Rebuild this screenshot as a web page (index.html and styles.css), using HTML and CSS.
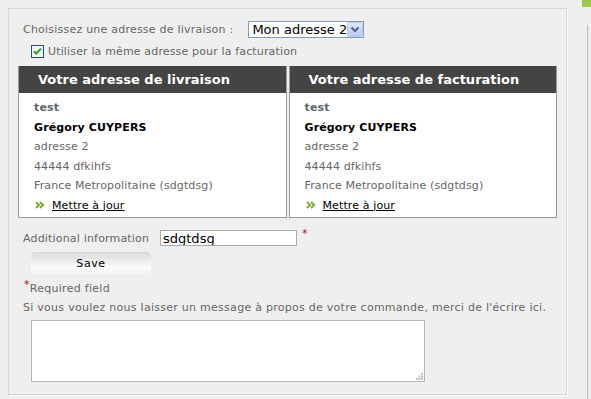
FILE: index.html
```html
<!DOCTYPE html>
<html lang="fr">
<head>
<meta charset="utf-8">
<link rel="stylesheet" href="styles.css">
</head>
<body>
<div class="layout">
  <div class="panel">
    <div class="row-choose">
      <span class="label choose-label">Choisissez une adresse de livraison :</span>
      <span class="select-wrap">
        <select class="select"><option>Mon adresse 2</option></select>
        <svg class="select-btn" width="16" height="15" viewBox="0 0 16 15">
          <defs><linearGradient id="sb" x1="0" y1="0" x2="0" y2="1"><stop offset="0" stop-color="#dfe9fd"/><stop offset="1" stop-color="#b4c8f4"/></linearGradient></defs>
          <rect x="0.5" y="0.5" width="15" height="14" rx="1.5" fill="url(#sb)" stroke="#b7c9ef"/>
          <path d="M4.5 5.5 L8 9 L11.5 5.5" fill="none" stroke="#4d6185" stroke-width="2"/>
        </svg>
      </span>
    </div>
    <div class="row-check">
      <svg class="checkbox" width="13" height="13" viewBox="0 0 13 13">
        <rect x="0.5" y="0.5" width="12" height="12" fill="#f4f4f0" stroke="#1c5180"/>
        <path d="M3 6.2 L5.2 8.6 L10 3.6" fill="none" stroke="#21a121" stroke-width="2"/>
      </svg>
      <span class="label check-label">Utiliser la même adresse pour la facturation</span>
    </div>
    <div class="boxes">
      <div class="box">
        <div class="box-head">Votre adresse de livraison</div>
        <div class="box-body">
          <div class="alias">test</div>
          <div class="name">Grégory CUYPERS</div>
          <div class="line">adresse 2</div>
          <div class="line">44444 dfkihfs</div>
          <div class="line">France Metropolitaine (sdgtdsg)</div>
          <div class="update">
            <svg class="arrows" width="10" height="8" viewBox="0 0 10 8"><path d="M1 1 L4 4 L1 7 M5 1 L8 4 L5 7" fill="none" stroke="#7fae2a" stroke-width="2"/></svg>
            <a href="#" class="link">Mettre à jour</a>
          </div>
        </div>
      </div>
      <div class="box">
        <div class="box-head">Votre adresse de facturation</div>
        <div class="box-body">
          <div class="alias">test</div>
          <div class="name">Grégory CUYPERS</div>
          <div class="line">adresse 2</div>
          <div class="line">44444 dfkihfs</div>
          <div class="line">France Metropolitaine (sdgtdsg)</div>
          <div class="update">
            <svg class="arrows" width="10" height="8" viewBox="0 0 10 8"><path d="M1 1 L4 4 L1 7 M5 1 L8 4 L5 7" fill="none" stroke="#7fae2a" stroke-width="2"/></svg>
            <a href="#" class="link">Mettre à jour</a>
          </div>
        </div>
      </div>
    </div>
    <div class="row-info">
      <span class="label info-label">Additional information</span>
      <input class="text-input" type="text" value="sdgtdsg">
      <span class="req">*</span>
    </div>
    <button class="save" type="button">Save</button>
    <div class="required"><span class="req small">*</span>Required field</div>
    <div class="message">Si vous voulez nous laisser un message à propos de votre commande, merci de l'écrire ici.</div>
    <div class="area-wrap">
      <textarea class="textarea"></textarea>
      <svg class="grip" width="7" height="7" viewBox="0 0 7 7">
        <rect x="5" y="0" width="2" height="2" fill="#c4c4c4"/>
        <rect x="2.5" y="2.5" width="2" height="2" fill="#c4c4c4"/>
        <rect x="5" y="2.5" width="2" height="2" fill="#c4c4c4"/>
        <rect x="0" y="5" width="2" height="2" fill="#c4c4c4"/>
        <rect x="2.5" y="5" width="2" height="2" fill="#c4c4c4"/>
        <rect x="5" y="5" width="2" height="2" fill="#c4c4c4"/>
      </svg>
    </div>
  </div>
  <div class="side"></div>
</div>
</body>
</html>
```
FILE: styles.css
```css
html, body {
  margin: 0;
  padding: 0;
  background: #efefef;
  font-family: "DejaVu Sans", Verdana, sans-serif;
  font-size: 11px;
  color: #666;
}
.layout {
  display: flex;
  align-items: flex-start;
  height: 399px;
}
.panel {
  margin: 8px 0 0 8px;
  width: 539px;
  height: 385px;
  padding: 0 9px 0 9px;
  border: 1px solid #d6d6d6;
  box-shadow: 1px 1px 0 #fafafa;
  display: flex;
  flex-direction: column;
}
.side {
  margin-left: 15px;
  width: 9px;
  height: 399px;
  position: relative;
  background: linear-gradient(#9dc84a, #9dc84a) 0 0 / 9px 7px no-repeat;
}
.side::after {
  content: "";
  position: absolute;
  left: 5px;
  top: 25px;
  bottom: 0;
  width: 1px;
  background: #b9b9b9;
}
.label { color: #666; }
.row-choose {
  display: flex;
  align-items: center;
  height: 17px;
  margin-top: 12px;
  padding-left: 5px;
}
.choose-label { letter-spacing: 0.22px; }
.select-wrap {
  position: relative;
  margin-left: 15px;
  display: inline-block;
  height: 17px;
}
.select {
  appearance: none;
  -webkit-appearance: none;
  box-sizing: border-box;
  width: 116px;
  height: 17px;
  border: 1px solid #7f9db9;
  border-radius: 0;
  background: #fff;
  color: #000;
  font-family: "DejaVu Sans", Verdana, sans-serif;
  font-size: 13px;
  padding: 0 0 0 3px;
  line-height: 15px;
  margin: 0;
}
.select-btn {
  position: absolute;
  right: 1px;
  top: 1px;
}
.row-check {
  display: flex;
  align-items: center;
  height: 13px;
  margin-top: 7px;
  padding-left: 13px;
}
.check-label { letter-spacing: 0.15px; }
.checkbox { margin-right: 4px; }
.boxes {
  display: flex;
  gap: 2px;
  margin-top: 8px;
}
.box {
  width: 267px;
  height: 151px;
  border: 1px solid #9a9a9a;
  border-top: 0;
  background: #fff;
}
.box-head {
  background: #444;
  color: #fff;
  font-weight: bold;
  font-size: 13px;
  height: 27px;
  line-height: 27px;
  padding-left: 19px;
}
.box-body {
  padding: 5px 0 0 15px;
  line-height: 19.5px;
  letter-spacing: 0.12px;
}
.alias { font-weight: bold; color: #5d6868; }
.name { font-weight: bold; color: #000; }
.line { color: #666; }
.update {
  display: flex;
  align-items: center;
}
.arrows { margin: 0 7px 0 1px; }
.link { color: #000; text-decoration: underline; }
.row-info {
  display: flex;
  align-items: center;
  margin-top: 12px;
  padding-left: 5px;
  height: 16px;
}
.info-label { width: 137px; letter-spacing: 0.18px; }
.text-input {
  box-sizing: border-box;
  width: 137px;
  height: 16px;
  border: 1px solid #a5acb2;
  background: #fff;
  color: #000;
  font-family: "DejaVu Sans", Verdana, sans-serif;
  font-size: 13px;
  padding: 0 2px;
  margin: 0;
  outline: none;
}
.req {
  color: #a01818;
  align-self: flex-start;
  margin-left: 5px;
  margin-top: -3px;
  font-size: 11px;
}
.save {
  margin: 6px 0 0 13px;
  width: 120px;
  height: 22px;
  border: 0;
  border-radius: 4px;
  background: linear-gradient(#d9d9d9, #fbfbfb 70%, #f3f3f3);
  color: #000;
  font-family: "DejaVu Sans", Verdana, sans-serif;
  font-size: 11px;
  padding: 0;
  letter-spacing: 0.6px;
}
.required {
  margin-top: 7px;
  padding-left: 6px;
  height: 14px;
  line-height: 15px;
  letter-spacing: 0.28px;
}
.req.small {
  margin: 0;
  position: relative;
  top: -4px;
}
.message {
  margin-top: 5px;
  padding-left: 5px;
  line-height: 15px;
  letter-spacing: 0.27px;
}
.area-wrap {
  position: relative;
  margin: 5px 0 0 13px;
  width: 394px;
}
.textarea {
  box-sizing: border-box;
  width: 394px;
  height: 62px;
  border: 1px solid #b8b8b8;
  background: #fff;
  margin: 0;
  resize: none;
  display: block;
}
.grip {
  position: absolute;
  right: 2px;
  bottom: 2px;
}
```
